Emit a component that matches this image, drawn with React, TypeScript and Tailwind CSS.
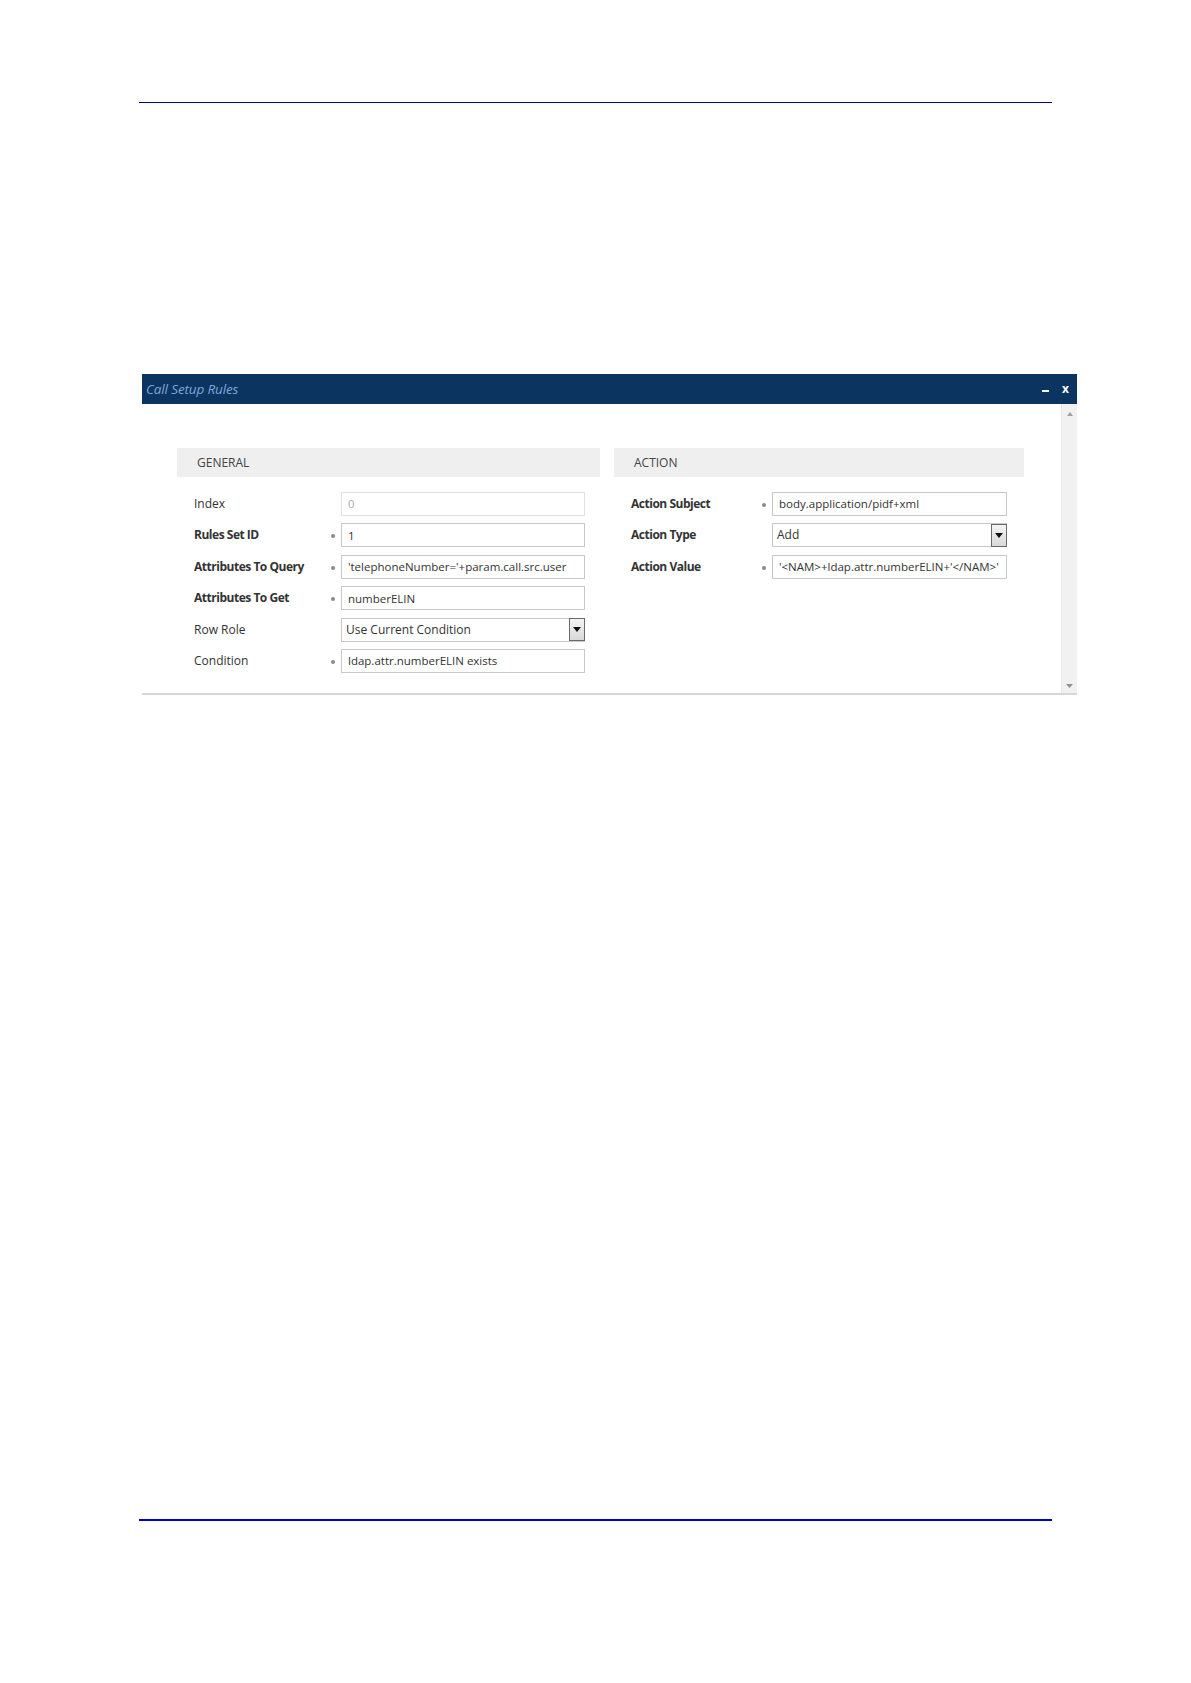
import React from "react";

type Field = {
  label: string;
  value: string;
  bold?: boolean;
  required?: boolean;
  select?: boolean;
  disabled?: boolean;
};

const general: Field[] = [
  { label: "Index", value: "0", disabled: true },
  { label: "Rules Set ID", value: "1", bold: true, required: true },
  { label: "Attributes To Query", value: "'telephoneNumber='+param.call.src.user", bold: true, required: true },
  { label: "Attributes To Get", value: "numberELIN", bold: true, required: true },
  { label: "Row Role", value: "Use Current Condition", select: true },
  { label: "Condition", value: "ldap.attr.numberELIN exists", required: true },
];

const action: Field[] = [
  { label: "Action Subject", value: "body.application/pidf+xml", bold: true, required: true },
  { label: "Action Type", value: "Add", bold: true, select: true },
  { label: "Action Value", value: "'<NAM>+ldap.attr.numberELIN+'</NAM>'", bold: true, required: true },
];

function Row({ f, labelW, inputW }: { f: Field; labelW: string; inputW: string }) {
  return (
    <div className="flex h-[24px] items-center">
      <div
        className={`${labelW} shrink-0 text-[12px] text-[#333] ${
          f.bold ? "font-bold tracking-[-0.04em]" : ""
        }`}
      >
        {f.label}
      </div>
      <div className="w-[10px] shrink-0 flex justify-start">
        {f.required && <div className="h-[4px] w-[4px] rounded-full bg-[#8a8a8a] mt-[2px]" />}
      </div>
      <div
        className={`${inputW} h-full shrink-0 flex items-center border ${
          f.disabled ? "border-[#e2e2e2]" : "border-[#c8c8c8]"
        } bg-white`}
      >
        <span
          className={`flex-1 truncate text-[11.5px] ${
            f.disabled ? "text-[#aaa]" : "text-[#333]"
          } ${f.select ? "pl-[4px] text-[12px]" : "pl-[6px]"}`}
        >
          {f.value}
        </span>
        {f.select && (
          <div className="h-[23px] w-[16px] -mr-px border border-[#6a6a6a] bg-gradient-to-b from-[#f4f4f4] to-[#d9d9d9] flex items-center justify-center">
            <svg width="8" height="5" viewBox="0 0 8 5">
              <path d="M0 0h8L4 5z" fill="#111" />
            </svg>
          </div>
        )}
      </div>
    </div>
  );
}

function Section({
  title,
  fields,
  width,
  labelW,
  inputW,
}: {
  title: string;
  fields: Field[];
  width: string;
  labelW: string;
  inputW: string;
}) {
  return (
    <div className={`${width} shrink-0`}>
      <div className="h-[29px] bg-[#efefef] flex items-center pl-[20px] text-[12px] text-[#444]">
        {title}
      </div>
      <div className="pt-[15px] pl-[17px] flex flex-col gap-[7.4px]">
        {fields.map((f) => (
          <Row key={f.label} f={f} labelW={labelW} inputW={inputW} />
        ))}
      </div>
    </div>
  );
}

export default function App() {
  return (
    <div
      className="w-[1191px] h-[1683px] bg-white overflow-hidden"
      style={{ fontFamily: '"Open Sans", "Liberation Sans", sans-serif' }}
    >
      {/* top rule */}
      <div className="h-[102px]" />
      <div className="ml-[139px] w-[913px] h-px bg-[#00008b]" />

      {/* dialog */}
      <div className="mt-[271px] ml-[142px] w-[935px]">
        <div className="h-[30px] bg-[#0b3461] flex items-center justify-between pl-[4px] pr-[8px]">
          <span className="italic text-[13.5px] text-[#7ea6d8] tracking-[-0.01em]">Call Setup Rules</span>
          <div className="flex items-center gap-[13px] text-white font-bold">
            <div className="w-[7px] h-[2px] bg-white mt-[4px]" />
            <span className="text-[12px] leading-none">x</span>
          </div>
        </div>
        <div className="flex h-[291px] border-b-2 border-[#d6d6d6]">
          <div className="w-[919px] pt-[44px] pl-[35px] flex gap-[14px]">
            <Section title="GENERAL" fields={general} width="w-[423px]" labelW="w-[137px]" inputW="w-[244px]" />
            <Section title="ACTION" fields={action} width="w-[410px]" labelW="w-[131px]" inputW="w-[235px]" />
          </div>
          <div className="w-[16px] bg-[#f1f1f1] border-l border-[#e6e6e6] flex flex-col items-center justify-between pt-[8px] pb-[5px]">
            <svg width="6" height="4" viewBox="0 0 6 4">
              <path d="M0 4h6L3 0z" fill="#a0a0a0" />
            </svg>
            <svg width="7" height="4" viewBox="0 0 7 4">
              <path d="M0 0h7L3.5 4z" fill="#909090" />
            </svg>
          </div>
        </div>
      </div>

      {/* bottom rule */}
      <div className="mt-[824px] ml-[139px] w-[913px] h-[2px] bg-[#0000c8]" />
    </div>
  );
}
